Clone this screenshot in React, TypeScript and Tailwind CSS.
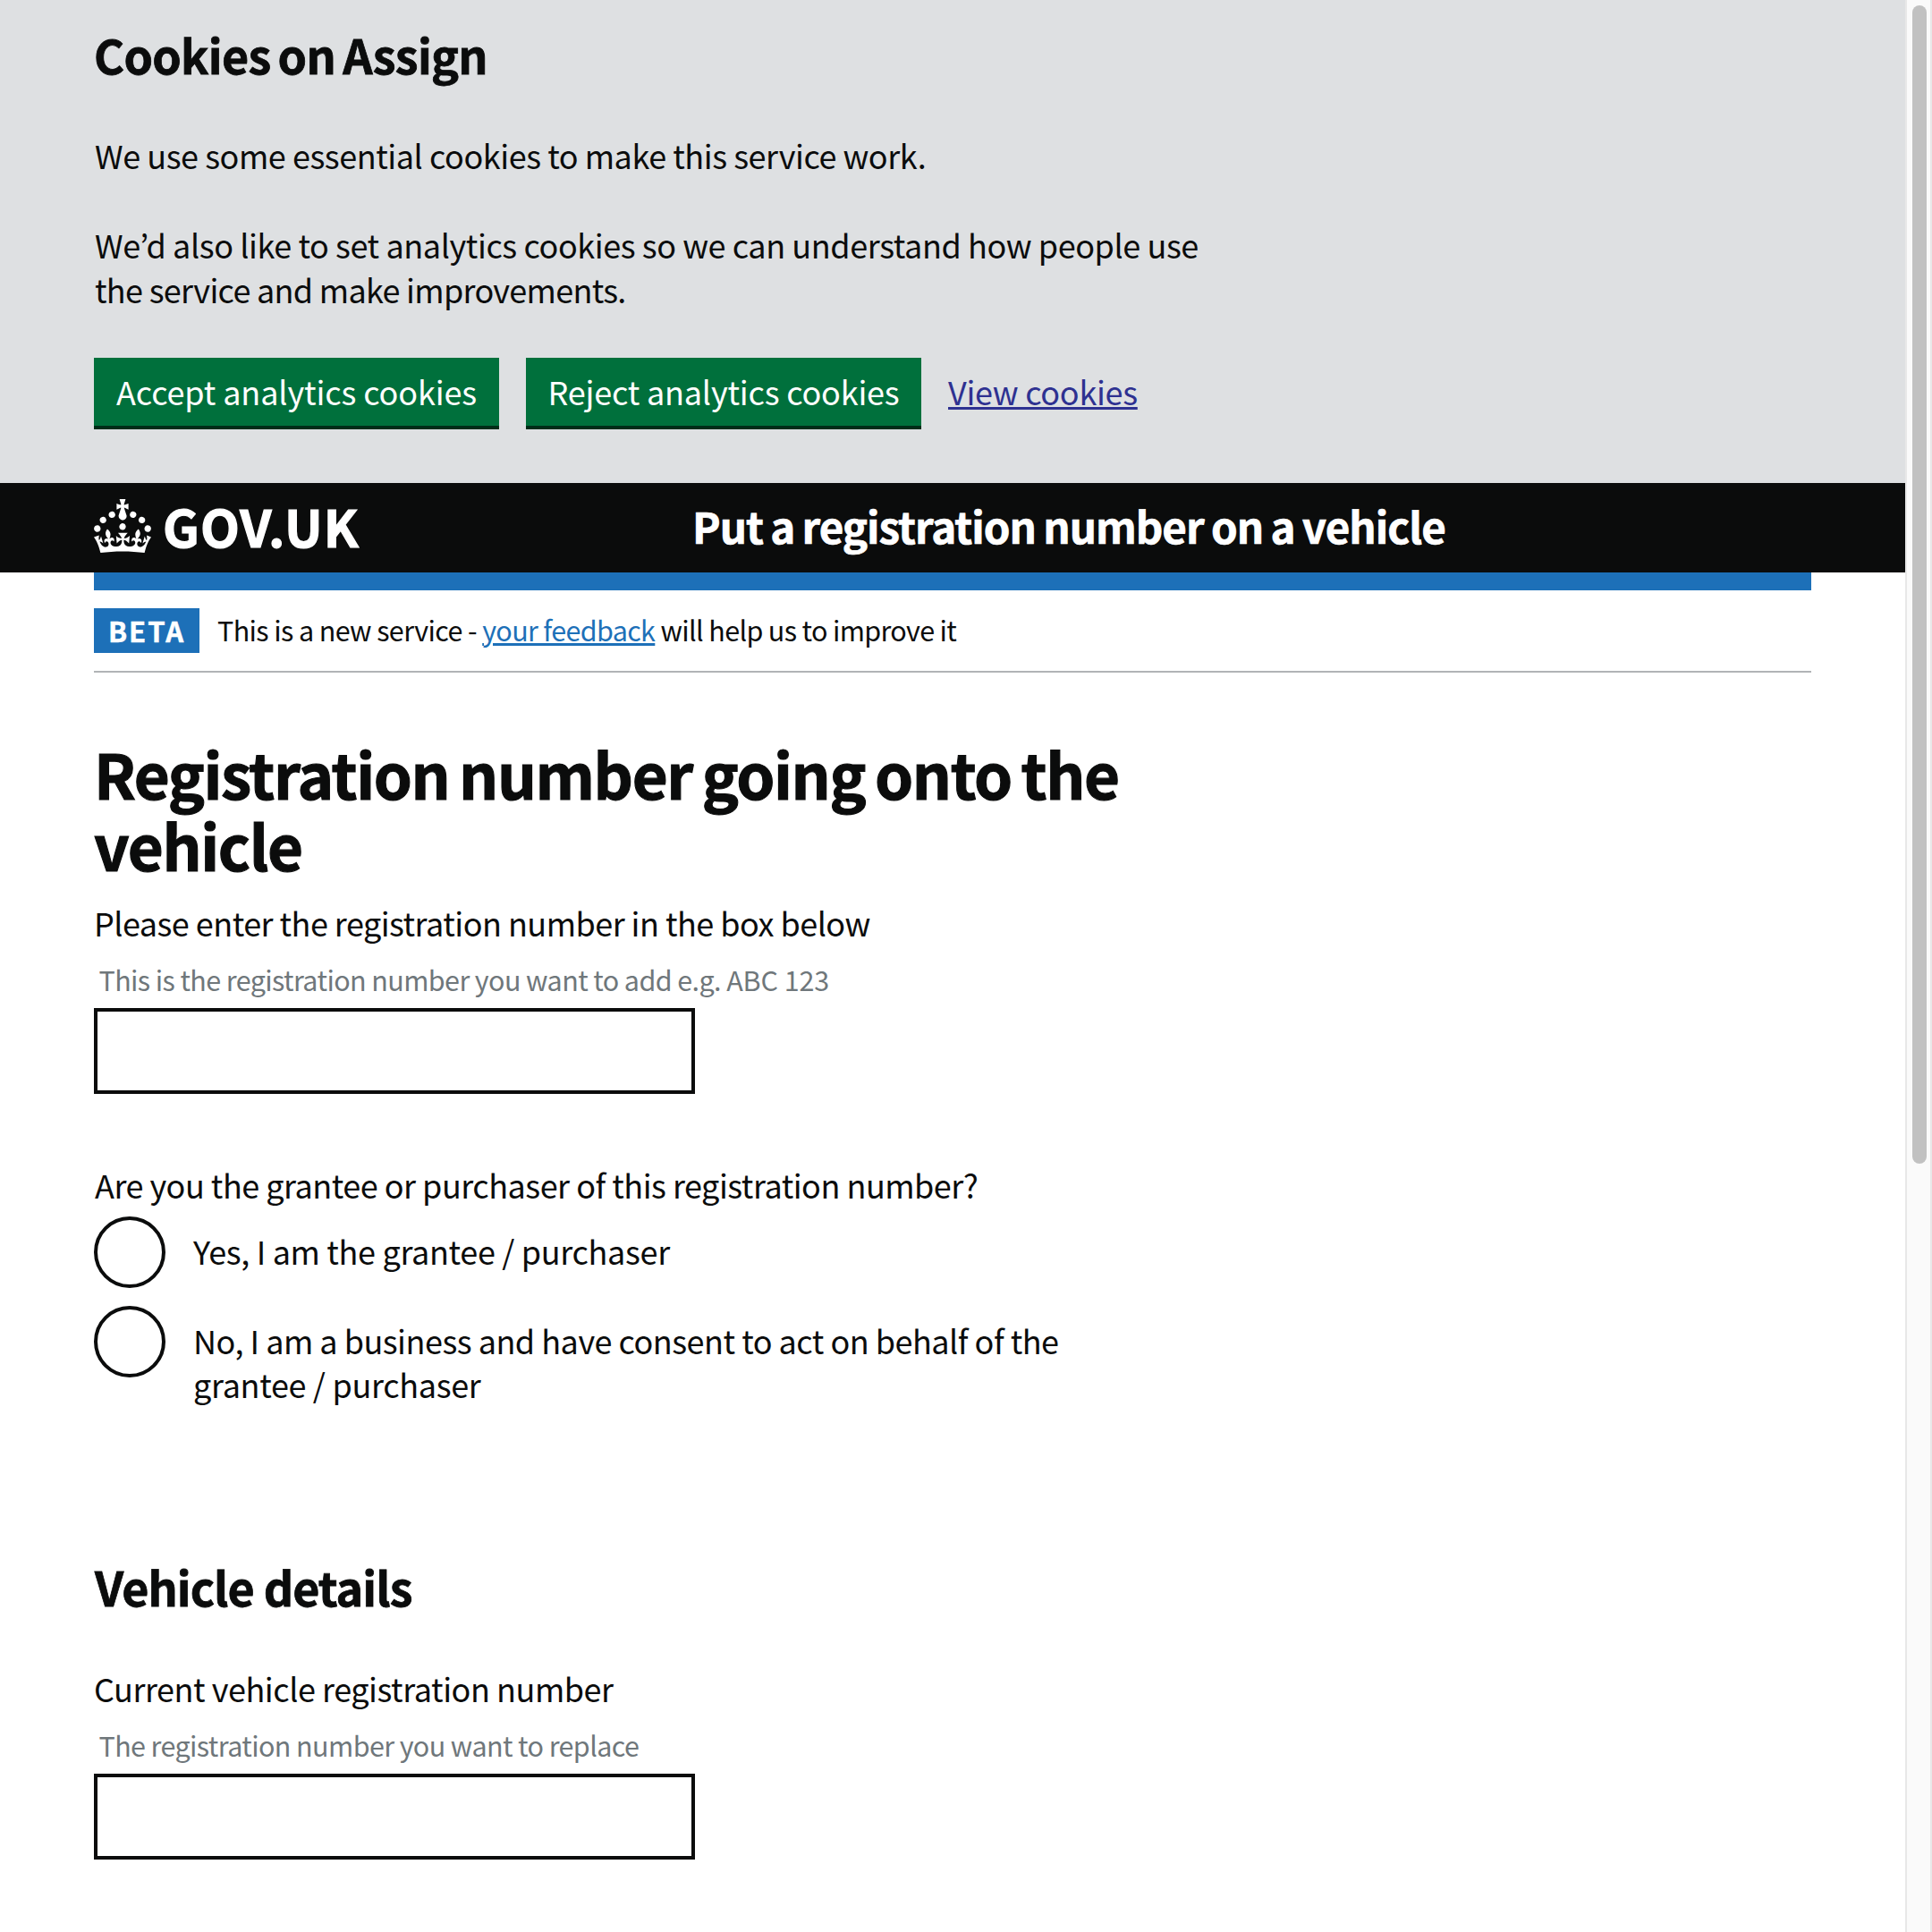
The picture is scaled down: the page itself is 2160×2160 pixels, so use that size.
import type { ReactNode } from "react";

const CROWN =
  "M22.6 10.4c-1 .4-2-.1-2.4-1-.4-.9.1-2 1-2.4.9-.4 2 .1 2.4 1s-.1 2-1 2.4m-5.9 6.7c-.9.4-2-.1-2.4-1-.4-.9.1-2 1-2.4.9-.4 2 .1 2.4 1s-.1 2-1 2.4m10.8-3.7c-1 .4-2-.1-2.4-1-.4-.9.1-2 1-2.4.9-.4 2 .1 2.4 1s0 2-1 2.4m3.3 4.8c-1 .4-2-.1-2.4-1-.4-.9.1-2 1-2.4.9-.4 2 .1 2.4 1s-.1 2-1 2.4M17 4.7l2.3 1.2V2.5l-2.3.7-.2-.2.9-3h-3.4l.9 3-.2.2c-.1.1-2.3-.7-2.3-.7v3.4L15 4.7c.1.1.1.2.2.2l-1.3 4c-.1.2-.1.4-.1.6 0 1.1.8 2 1.9 2.2h.7c1-.2 1.9-1.1 1.9-2.1 0-.2 0-.4-.1-.6l-1.3-4c-.1-.2 0-.2.1-.3m-7.6 5.7c.9.4 2-.1 2.4-1 .4-.9-.1-2-1-2.4-.9-.4-2 .1-2.4 1s0 2 1 2.4m-5 3c.9.4 2-.1 2.4-1 .4-.9-.1-2-1-2.4-.9-.4-2 .1-2.4 1s.1 2 1 2.4m-3.2 4.8c.9.4 2-.1 2.4-1 .4-.9-.1-2-1-2.4-.9-.4-2 .1-2.4 1s0 2 1 2.4m14.8 11c4.4 0 8.6.3 12.3.8 1.1-4.5 2.4-7 3.7-8.8l-2.5-.9c.2 1.3.3 1.9 0 2.7-.4-.4-.8-1.1-1.1-2.3l-1.2 4c.7-.5 1.3-.8 2-.9-1.1 2.5-2.6 3.1-3.5 3-1.1-.2-1.7-1.2-1.5-2.1.3-1.2 1.5-1.5 2.1-.1 1.1-2.3-.8-3-2-2.3 1.9-1.9 2.1-3.5.6-5.6-2.1 1.6-2.1 3.2-1.2 5.5-1.2-1.4-3.2-.6-2.5 1.6.9-1.4 2.1-.5 1.9.8-.2 1.1-1.7 2.1-3.5 1.9-2.7-.2-2.9-2.1-2.9-3.6.7-.1 1.9.5 2.9 1.9l.4-4.3c-1.1 1.1-2.1 1.4-3.2 1.4.4-1.2 2.1-3 2.1-3h-5.4s1.7 1.9 2.1 3c-1.1 0-2.1-.2-3.2-1.4l.4 4.3c1-1.4 2.2-2 2.9-1.9-.1 1.5-.2 3.4-2.9 3.6-1.9.2-3.4-.8-3.5-1.9-.2-1.3 1-2.2 1.9-.8.7-2.3-1.2-3-2.5-1.6.9-2.2.9-3.9-1.2-5.5-1.5 2-1.3 3.7.6 5.6-1.2-.7-3.1 0-2 2.3.6-1.4 1.8-1.1 2.1.1.2.9-.3 1.9-1.5 2.1-.9.2-2.4-.5-3.5-3 .6 0 1.2.3 2 .9l-1.2-4c-.3 1.1-.7 1.9-1.1 2.3-.3-.8-.2-1.4 0-2.7l-2.9.9C1.3 23 2.6 25.5 3.7 30c3.7-.5 7.9-.8 12.3-.8";

function CookieBanner() {
  return (
    <section className="h-[540px] bg-[#dee0e2] pt-[31px] pl-[105px]">
      <h2 className="text-[52px] leading-[60px] font-bold tracking-[-0.7px] [word-spacing:-3px] [-webkit-text-stroke:0.8px_currentColor]">
        Cookies on Assign
      </h2>
      <p className="mt-[57px] pl-px tracking-[-0.45px]">We use some essential cookies to make this service work.</p>
      <p className="mt-[50px] pl-px tracking-[-0.42px]">
        We’d also like to set analytics cookies so we can understand how people use
        <br />
        <span className="tracking-[-0.7px]">the service and make improvements.</span>
      </p>
      <div className="mt-[52px] flex h-20 items-stretch">
        <CookieButton className="w-[453px] tracking-[-0.13px]">Accept analytics cookies</CookieButton>
        <CookieButton className="ml-[30px] w-[442px] tracking-[-0.2px]">Reject analytics cookies</CookieButton>
        <a
          href="#cookies"
          className="ml-[30px] self-start pt-3 tracking-[-0.3px] text-[#2e3191] underline decoration-[3px] underline-offset-[2px] [text-decoration-skip-ink:none]"
        >
          View cookies
        </a>
      </div>
    </section>
  );
}

function CookieButton({ className, children }: { className: string; children: ReactNode }) {
  return (
    <button
      type="button"
      className={`flex items-start justify-center border-b-4 border-[#002d18] bg-[#00703c] pt-3 whitespace-nowrap text-white ${className}`}
    >
      {children}
    </button>
  );
}

function Header() {
  return (
    <header className="flex h-[100px] bg-[#0b0c0c] pl-[105px] font-bold whitespace-nowrap text-white">
      <svg viewBox="0 0 32 30" className="mt-[18px] h-[60px] w-16 shrink-0" fill="currentColor" aria-hidden="true">
        <path d={CROWN} />
      </svg>
      <span className="ml-[13px] w-[592px] pt-[17px] text-[57px] leading-[60px] tracking-[1.1px] [-webkit-text-stroke:1.2px_currentColor]">
        GOV.UK
      </span>
      <span className="pt-[18px] text-[47.5px] leading-[60px] tracking-[-1px] [word-spacing:-1.5px] [-webkit-text-stroke:0.7px_currentColor]">
        Put a registration number on a vehicle
      </span>
    </header>
  );
}

function PhaseBanner() {
  return (
    <div className="flex h-[92px] items-start border-b-2 border-[#b1b4b6] pt-5 text-[30.5px] leading-[50px] whitespace-nowrap">
      <strong className="h-[50px] w-[118px] bg-[#1d70b8] pl-[16px] text-[31px] leading-[49px] font-bold tracking-[2px] text-white [-webkit-text-stroke:0.5px_currentColor]">
        BETA
      </strong>
      <p className="-mt-px ml-[20px] tracking-[-0.61px]">
        This is a new service -{" "}
        <a
          href="#feedback"
          className="tracking-[-0.66px] text-[#1d70b8] underline decoration-[3px] underline-offset-[2px]"
        >
          your feedback
        </a>{" "}
        <span className="tracking-[-0.65px]">will help us to improve it</span>
      </p>
    </div>
  );
}

function TextField() {
  return <input type="text" className="mt-3 block h-24 w-[672px] border-4 border-[#0b0c0c] bg-white px-4" />;
}

function Radio({ children }: { children: ReactNode }) {
  return (
    <label className="flex items-start">
      <span className="size-20 shrink-0 rounded-full border-4 border-[#0b0c0c]" />
      <span className="ml-[31px] pt-[14px] leading-[49px] tracking-[-0.33px]">{children}</span>
    </label>
  );
}

function Scrollbar() {
  return (
    <div className="w-[30px] shrink-0 border-x-2 border-[#e8e8e8] bg-[#fafafa] pt-[6px] pl-[6px]">
      <div className="h-[1295px] w-4 rounded-full bg-[#c1c1c1]" />
    </div>
  );
}

export default function App() {
  return (
    <div className="flex h-[2160px] w-[2160px] overflow-hidden bg-white font-['Noto_Sans_CJK_KR',sans-serif] text-[36px] leading-[50px] text-[#0b0c0c]">
      <div className="min-w-0 flex-1">
        <CookieBanner />
        <Header />
        <div className="mr-[105px] ml-[105px]">
          <div className="h-5 bg-[#1d70b8]" />
          <PhaseBanner />
          <main>
            <h1 className="mt-[72px] text-[69px] leading-[80px] font-bold tracking-[-1.4px] [word-spacing:-3.5px] [-webkit-text-stroke:1.1px_currentColor]">
              Registration number going onto the
              <br />
              vehicle
            </h1>
            <p className="mt-[22px] tracking-[-0.53px]">Please enter the registration number in the box below</p>
            <p className="mt-[19px] pl-[5.5px] text-[30.5px] leading-10 tracking-[-0.6px] text-[#6f777b]">
              This is the registration number you want to add e.g. <span className="tracking-[-0.1px]">ABC 123</span>
            </p>
            <TextField />
            <p className="mt-[76px] pl-px tracking-[-0.5px]">Are you the grantee or purchaser of this registration number?</p>
            <div className="mt-[11px] flex flex-col gap-5">
              <Radio>Yes, I am the grantee / purchaser</Radio>
              <Radio>
                <span className="tracking-[-0.5px]">No, I am a business and have consent to act on behalf of the</span>
                <br />
                grantee / purchaser
              </Radio>
            </div>
            <h2 className="mt-[172px] pl-px text-[52px] leading-[60px] font-bold tracking-[-0.95px] [-webkit-text-stroke:0.8px_currentColor]">
              Vehicle details
            </h2>
            <p className="mt-[58px] tracking-[-0.46px]">Current vehicle registration number</p>
            <p className="mt-[19px] pl-[5.5px] text-[30.5px] leading-10 tracking-[-0.6px] text-[#6f777b]">
              The registration number you want to replace
            </p>
            <TextField />
          </main>
        </div>
      </div>
      <Scrollbar />
    </div>
  );
}
